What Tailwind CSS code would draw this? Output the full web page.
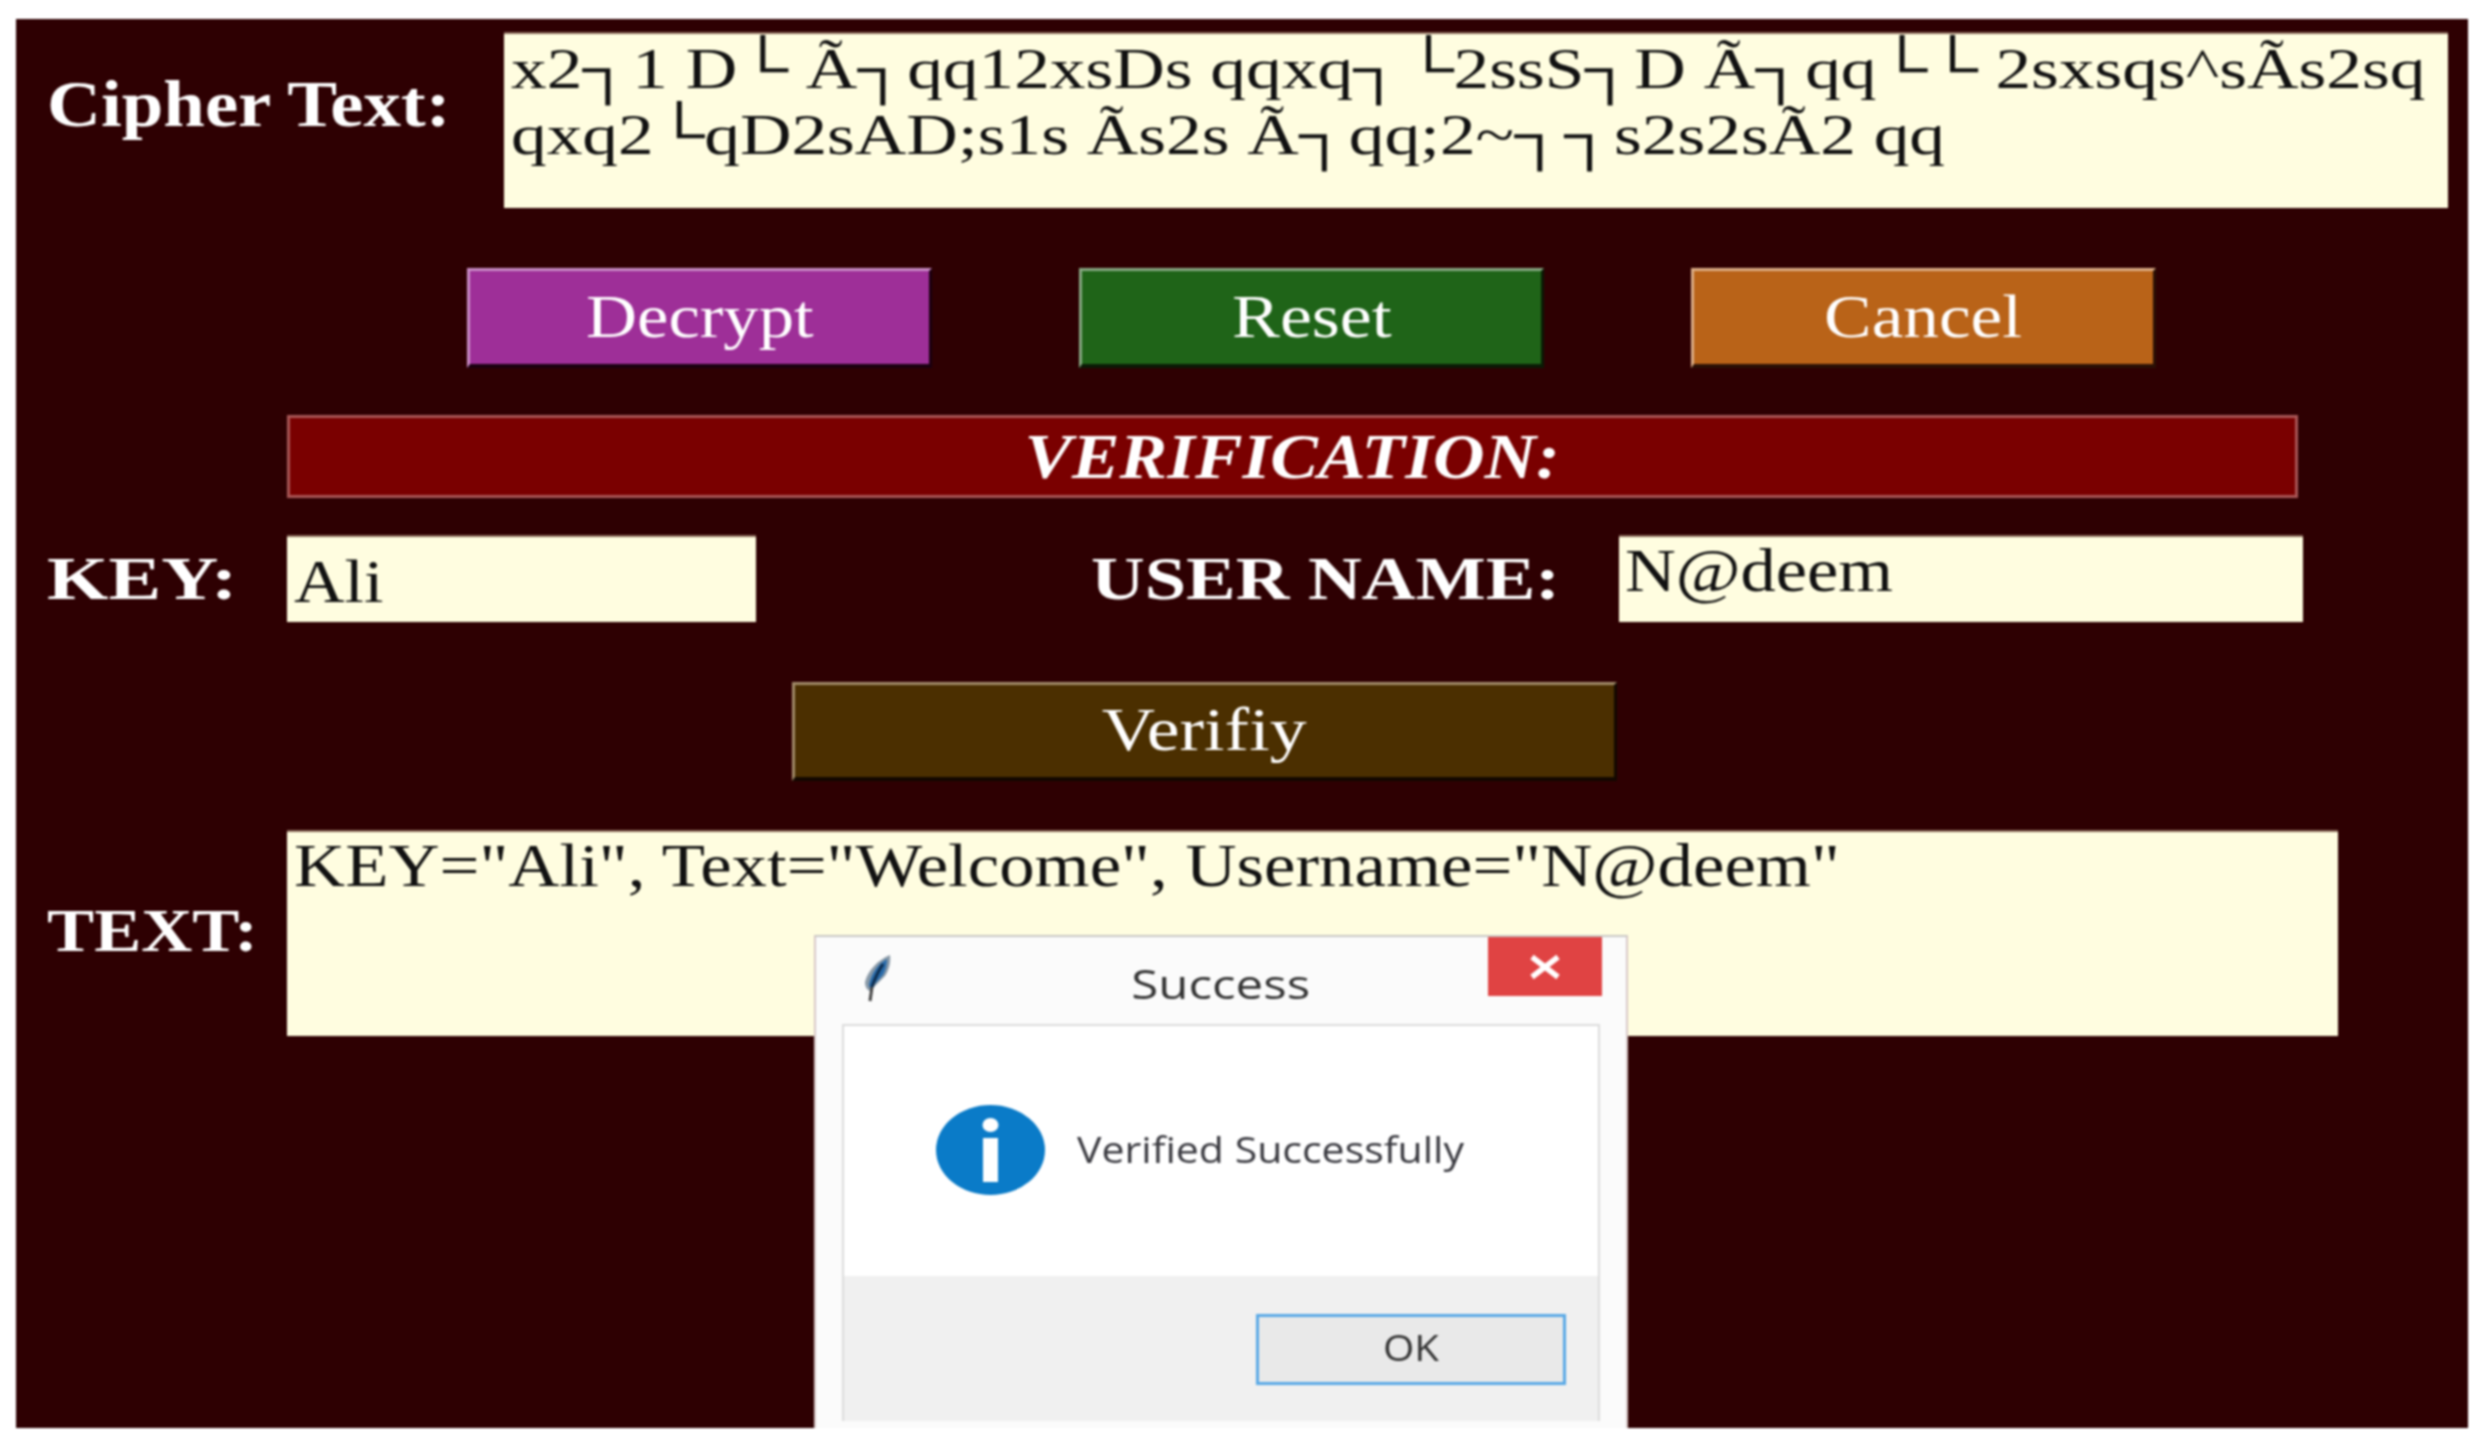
<!DOCTYPE html>
<html>
<head>
<meta charset="utf-8">
<script src="https://cdn.jsdelivr.net/npm/@tailwindcss/browser@4"></script>
</head>
<body class="bg-white m-0 overflow-hidden">
<div class="w-[2489px] h-[1446px] pt-[19px] pl-[16px] blur-[1px]">
  <main class="relative w-[2452px] h-[1409px] bg-[#2e0002] font-['Liberation_Serif',serif]">
    <!-- Row 1 -->
    <section class="flex items-start pt-[13px]">
      <div class="w-[488px] pl-[31px] pt-[35px] text-[65px] leading-[75px] font-bold text-white whitespace-pre"><span class="inline-block origin-left scale-x-[1.15]">Cipher Text:</span></div>
      <div class="w-[1944px] h-[176px] bg-[#fffde0] border-t-[2px] border-[#8a6a5a] pl-[7px] pt-[2px] text-[#111] text-[58px] leading-[66px] whitespace-pre"><div class="w-fit origin-left scale-x-[1.23]">x2<span class="tracking-[-15px]">┐</span> 1 D<span class="tracking-[-15px]"> </span>└ Ã<span class="tracking-[-15px]">┐</span> qq12xsDs qqxq<span class="tracking-[-15px]">┐</span> <span class="tracking-[-15px]"> </span>└2ssS<span class="tracking-[-15px]">┐</span> D Ã<span class="tracking-[-15px]">┐</span> qq<span class="tracking-[-15px]"> </span>└<span class="tracking-[-15px]"> </span>└ 2sxsqs^sÃs2sq</div><div class="w-fit origin-left scale-x-[1.23]">qxq2<span class="tracking-[-15px]"> </span>└qD2sAD;s1s Ãs2s Ã<span class="tracking-[-15px]">┐</span> qq;2~<span class="tracking-[-15px]">┐</span> <span class="tracking-[-15px]">┐</span> s2s2sÃ2 qq</div></div>
    </section>
    <!-- Buttons -->
    <section class="flex gap-[147px] mt-[60px] ml-[451px]">
      <button class="flex items-center justify-center w-[465px] h-[100px] pb-[3px] bg-[#9e2f98] border-t-[3px] border-l-[3px] border-t-[#c98cc6] border-l-[#c98cc6] border-b-[4px] border-r-[3px] border-b-[#1a0010] border-r-[#1a0010] text-white text-[62px]"><span class="inline-block scale-x-[1.14]">Decrypt</span></button>
      <button class="flex items-center justify-center w-[465px] h-[100px] pb-[3px] bg-[#1f6418] border-t-[3px] border-l-[3px] border-t-[#87a883] border-l-[#87a883] border-b-[4px] border-r-[3px] border-b-[#0a1a05] border-r-[#0a1a05] text-white text-[62px]"><span class="inline-block scale-x-[1.16]">Reset</span></button>
      <button class="flex items-center justify-center w-[465px] h-[100px] pb-[3px] bg-[#b96318] border-t-[3px] border-l-[3px] border-t-[#dcae86] border-l-[#dcae86] border-b-[4px] border-r-[3px] border-b-[#2a1005] border-r-[#2a1005] text-white text-[62px]"><span class="inline-block scale-x-[1.15]">Cancel</span></button>
    </section>
    <!-- Verification bar -->
    <section class="flex items-center justify-center w-[2011px] h-[83px] mt-[47px] ml-[271px] bg-[#7a0000] border-[3px] border-[#a85555] text-white text-[64px] font-bold italic"><span class="inline-block scale-x-[1.115]">VERIFICATION:</span></section>
    <!-- Key / user -->
    <section class="flex items-center h-[87px] mt-[37px]">
      <div class="w-[271px] pl-[31px] text-[62px] font-bold text-white"><span class="inline-block origin-left scale-x-[1.275]">KEY:</span></div>
      <div class="w-[469px] h-[87px] bg-[#fffde0] border-t-[2px] border-[#8a6a5a] pl-[7px] pt-[8px] text-[#111] text-[62px] leading-[72px]"><div class="w-fit origin-left scale-x-[1.13]">Ali</div></div>
      <div class="w-[863px] pl-[335px] text-[62px] font-bold text-white whitespace-pre"><span class="inline-block origin-left scale-x-[1.2]">USER NAME:</span></div>
      <div class="w-[684px] h-[87px] bg-[#fffde0] border-t-[2px] border-[#8a6a5a] pl-[6px] text-[#111] text-[62px] leading-[66px]"><div class="w-fit origin-left scale-x-[1.135]">N@deem</div></div>
    </section>
    <!-- Verify -->
    <button class="flex items-center justify-center w-[825px] h-[99px] pb-[3px] mt-[60px] ml-[776px] bg-[#4b2f00] border-t-[3px] border-l-[3px] border-t-[#a08a68] border-l-[#a08a68] border-b-[4px] border-r-[3px] border-b-[#120800] border-r-[#120800] text-white text-[62px]"><span class="inline-block scale-x-[1.19]">Verifiy</span></button>
    <!-- Text -->
    <section class="flex items-center mt-[49px]">
      <div class="w-[271px] pl-[31px] pb-[6px] text-[62px] font-bold text-white"><span class="inline-block origin-left scale-x-[1.14]">TEXT:</span></div>
      <div class="w-[2051px] h-[206px] bg-[#fffde0] border-t-[2px] border-[#8a6a5a] pl-[7px] text-[#111] text-[62px] leading-[66px] whitespace-pre"><div class="w-fit origin-left scale-x-[1.142]">KEY="Ali", Text="Welcome", Username="N@deem"</div></div>
    </section>
    <!-- Dialog overlay -->
    <div class="absolute left-[798px] top-[916px] w-[814px] h-[493px] bg-[#fbfbfb] border-t-[2px] border-x-[2px] border-t-[#c8c8c4] border-x-[#d8c8c8] font-['Open_Sans',sans-serif]">
      <header class="relative flex items-center justify-center h-[87px] pt-[6px] text-[#333] text-[40px]">
        <svg class="absolute left-[47px] top-[17px] w-[30px] h-[48px]" viewBox="0 0 30 48">
          <path d="M27 1C15 6 5 16 2 28C2 33 4 36 7 37L22 22C26 16 28 8 27 1Z" fill="#8a9aa8"/>
          <path d="M24 5C15 10 9 18 6 30C6 33 7 34 8 34L20 21C23 16 24 10 24 5Z" fill="#2a6cab"/>
          <path d="M20 10C16 16 12 24 9 33" stroke="#0d2c4d" stroke-width="3" fill="none"/>
          <path d="M9 33L7 47" stroke="#444" stroke-width="3" fill="none"/>
        </svg>
        <span class="inline-block scale-x-[1.23]">Success</span>
        <div class="absolute left-[672px] top-0 w-[114px] h-[59px] bg-[#e04343] flex items-center justify-center">
          <svg class="w-[34px] h-[26px]" viewBox="0 0 34 26"><path d="M4 3L30 23M30 3L4 23" stroke="#fff" stroke-width="5.5"/></svg>
        </div>
      </header>
      <div class="mx-[26px] h-[397px] border-t-[2px] border-x-[2px] border-[#dcdcdc] flex flex-col">
        <div class="flex items-center h-[250px] bg-white pb-[2px]">
          <svg class="ml-[92px] w-[109px] h-[90px] shrink-0" viewBox="0 0 109 90">
            <ellipse cx="54.5" cy="45" rx="54.5" ry="45" fill="#0a7bc8"/>
            <ellipse cx="54.5" cy="20" rx="8" ry="7" fill="#fff"/>
            <rect x="47" y="33" width="15" height="44" fill="#fff"/>
          </svg>
          <span class="ml-[32px] text-[#3a3a40] text-[36px] inline-block origin-left scale-x-[1.14] whitespace-pre">Verified Successfully</span>
        </div>
        <div class="flex-1 bg-[#f0f0f0] flex justify-end items-start pt-[38px] pr-[32px]">
          <button class="w-[310px] h-[71px] pb-[4px] border-[3px] border-[#5aa9e6] bg-[#e9e9e9] text-[#333] text-[36px]"><span class="inline-block scale-x-[1.12]">OK</span></button>
        </div>
      </div>
    </div>
  </main>
</div>
</body>
</html>
